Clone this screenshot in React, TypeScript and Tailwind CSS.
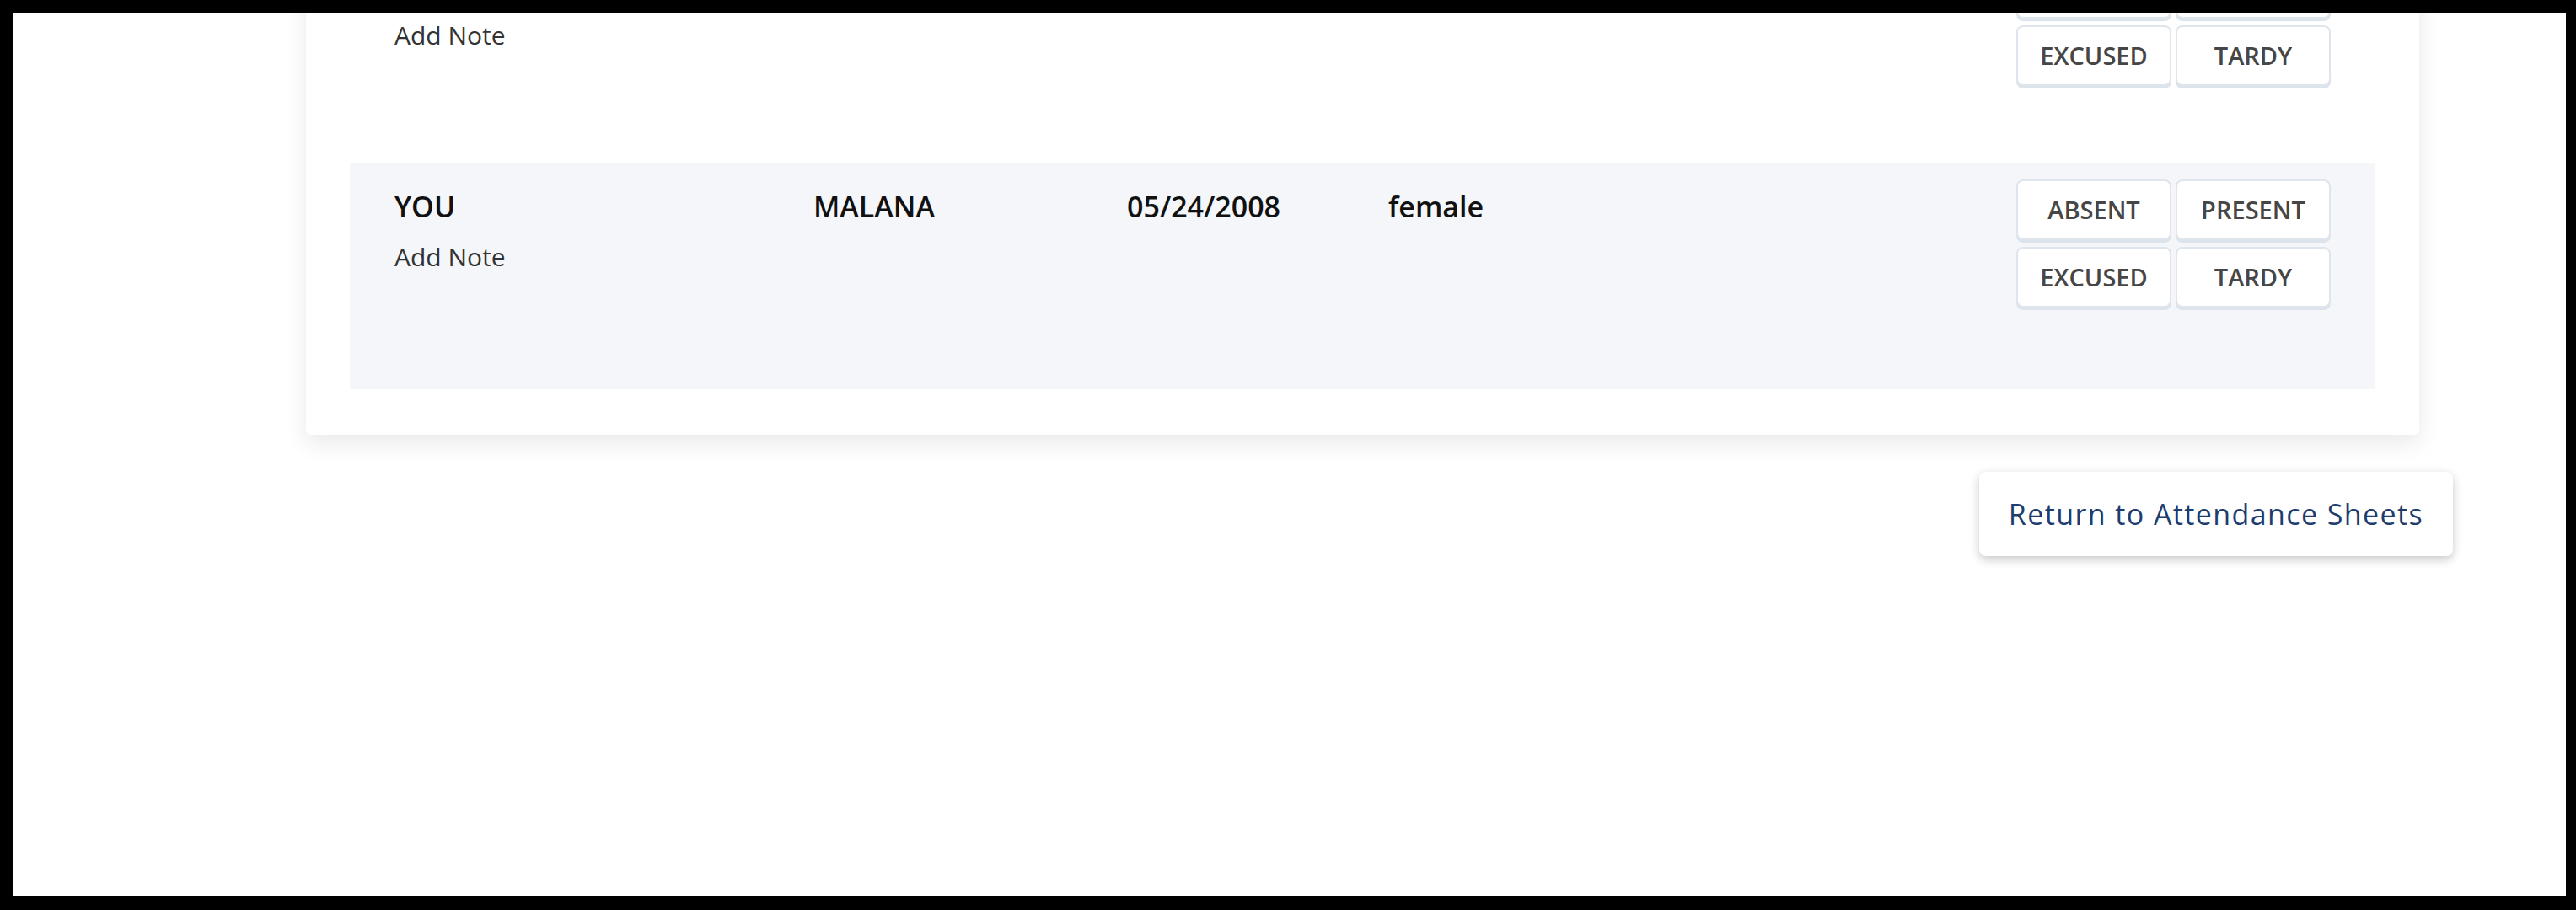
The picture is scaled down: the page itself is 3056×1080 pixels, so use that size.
import React from "react";

const font = { fontFamily: '"Open Sans", "Liberation Sans", sans-serif' };

function StatusButtons({ hideTop }: { hideTop?: boolean }) {
  const btn =
    "w-[184px] h-[72px] flex items-center justify-center bg-white rounded-[8px] border-2 border-[#dfe5ec] shadow-[0_3px_0_#dde3ea] text-[29px] font-semibold text-[#464646] uppercase";
  return (
    <div className="flex flex-col gap-[8px]">
      <div className="flex gap-[5px]">
        <div className={btn}>{hideTop ? null : "Absent"}</div>
        <div className={btn}>{hideTop ? null : "Present"}</div>
      </div>
      <div className="flex gap-[5px]">
        <div className={btn}>Excused</div>
        <div className={btn}>Tardy</div>
      </div>
    </div>
  );
}

function Row({
  first,
  last,
  dob,
  gender,
  gray,
  height,
  hideTop,
}: {
  first?: string;
  last?: string;
  dob?: string;
  gender?: string;
  gray?: boolean;
  height: string;
  hideTop?: boolean;
}) {
  const strong = "text-[34px] leading-[40px] font-semibold text-[#111111]";
  return (
    <div
      className={`flex items-start px-[53px] pt-[20px] ${height} ${
        gray ? "bg-[#f4f6f9]" : "bg-white"
      }`}
    >
      <div className="flex flex-1 items-start pt-[12px]">
        <div className="w-[497px] flex flex-col">
          <div className={`${strong} h-[40px]`}>{first}</div>
          <div className="mt-[22px] text-[30px] leading-[36px] text-[#333333]">Add Note</div>
        </div>
        <div className={`w-[372px] ${strong}`}>{last}</div>
        <div className={`w-[310px] ${strong}`}>{dob}</div>
        <div className={strong}>{gender}</div>
      </div>
      <StatusButtons hideTop={hideTop} />
    </div>
  );
}

export default function App() {
  return (
    <div className="w-[3056px] h-[1080px] bg-black pt-[16px] pl-[15px] pr-[12px] pb-[17px]" style={font}>
      <div className="w-full h-full bg-white overflow-hidden flex flex-col">
        <div className="ml-[348px] mr-[174px] mt-[-138px] bg-white rounded-[6px] shadow-[0_10px_28px_rgba(0,0,0,0.09)] px-[52px] pt-[52px] pb-[54px]">
          <Row height="h-[263px]" hideTop />
          <Row first="YOU" last="MALANA" dob="05/24/2008" gender="female" gray height="h-[269px]" />
        </div>
        <div className="flex justify-end mr-[134px] mt-[44px]">
          <button className="w-[562px] h-[100px] bg-white rounded-[8px] shadow-[0_4px_12px_rgba(0,0,0,0.22)] text-[34px] tracking-[1.4px] font-medium text-[#1e3d6e] flex items-center justify-center">
            Return to Attendance Sheets
          </button>
        </div>
      </div>
    </div>
  );
}
